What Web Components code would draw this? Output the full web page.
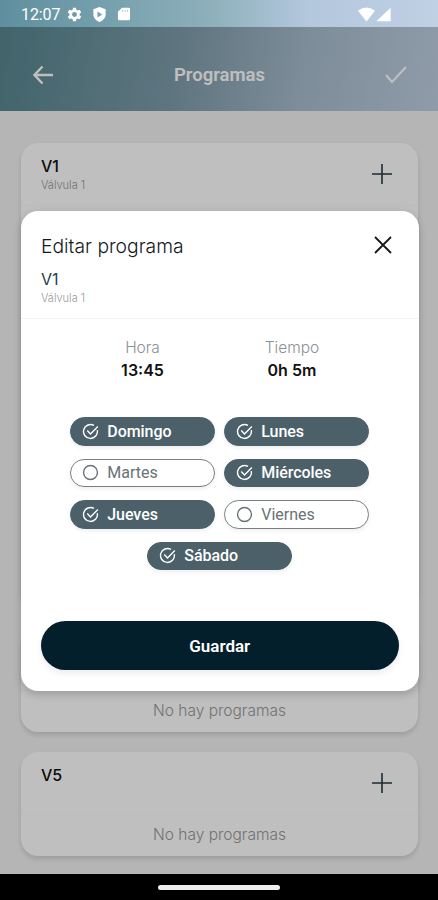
<!DOCTYPE html>
<html lang="es">
<head>
<meta charset="utf-8">
<title>Programas</title>
<style>
body {
    margin: 0;
    font-family: Inter, "Liberation Sans", sans-serif;
}
</style>
</head>
<body>
<program-app></program-app>

<script>
const icons = {
    back: '<path d="M21 11H3M10.500 2.500 2.500 11l8 8.500"/>',
    check: '<path d="m1 11 6 7L21 3"/>',
    plus: '<path d="M11 1v20M1 11h20"/>',
    close: '<path d="m3 3 16 16M19 3 3 19"/>',
    circle: '<circle cx="11" cy="11" r="9"/>',
    checked: '<path d="M19.8 9.3A9 9 0 1 1 15.5 3.2M6.8 9.8l4.2 4.4L20.5 4.5"/>',
    gear: '<path fill="currentColor" stroke="none" fill-rule="evenodd" d="m8.8 1-.5 3-2 1.2-2.9-1.1-2.2 3.8L3.6 9.8v2.4l-2.4 1.9 2.2 3.8 2.9-1.1 2 1.2.5 3h4.4l.5-3 2-1.2 2.9 1.1 2.2-3.8-2.4-1.9V9.8l2.4-1.9-2.2-3.8-2.9 1.1-2-1.2-.5-3zM11 7.4a3.6 3.6 0 1 1 0 7.2 3.6 3.6 0 0 1 0-7.2z"/>',
    shield: '<path fill="currentColor" stroke="none" fill-rule="evenodd" d="M11 0 2 3.2V11c0 5.2 4 9 9 11 5-2 9-5.8 9-11V3.2zM8 6.5v9l7-4.5z"/>',
    card: '<path fill="currentColor" stroke="none" fill-rule="evenodd" d="M8 1h10.5q2 0 2 2v16q0 2-2 2h-15q-2 0-2-2V7.5zM8 5v2h1.500V5zm4 0v2h1.500V5zm4 0v2h1.500V5z"/>',
    wifi: '<path fill="currentColor" stroke="none" d="M0 6Q11-2 22 6L11 20z"/>',
    signal: '<path fill="currentColor" stroke="none" d="M21.5 1v20h-21z"/>'
};

class UiIcon extends HTMLElement {
    constructor() {
        super();
        this.attachShadow({ mode: 'open' });
    }

    connectedCallback() {
        this.shadowRoot.innerHTML = `
            <style>
            :host {
                display: block;
                flex: none;
                height: var(--size, 20px);
                width: var(--size, 20px);
            }

            svg {
                display: block;
                fill: none;
                height: 100%;
                stroke: currentColor;
                stroke-width: var(--stroke, 1.8);
                width: 100%;
            }
            </style>
            <svg viewBox="0 0 22 22">${icons[this.getAttribute('name')]}</svg>
        `;
    }
}

class StatusBar extends HTMLElement {
    constructor() {
        super();
        this.attachShadow({ mode: 'open' }).innerHTML = `
            <style>
            :host {
                align-items: center;
                box-sizing: border-box;
                color: #fff;
                display: flex;
                font: 400 16px Roboto, sans-serif;
                height: 27px;
                padding: 1px 47px 0 21px;
            }

            span {
                letter-spacing: -.1px;
                width: 46px;
            }

            ui-icon {
                --size: 15px;
                margin-right: 10px;
            }

            .wifi {
                --size: 17px;
                margin: 0 1px 0 auto;
            }

            .signal {
                --size: 15px;
                margin: 0;
            }
            </style>
            <span>12:07</span>
            <ui-icon name="gear"></ui-icon>
            <ui-icon name="shield"></ui-icon>
            <ui-icon name="card" style="--size: 14px"></ui-icon>
            <ui-icon class="wifi" name="wifi"></ui-icon>
            <ui-icon class="signal" name="signal"></ui-icon>
        `;
    }
}

class TopBar extends HTMLElement {
    constructor() {
        super();
        this.attachShadow({ mode: 'open' }).innerHTML = `
            <style>
            :host {
                align-items: center;
                box-sizing: border-box;
                color: #fff;
                display: flex;
                font: 600 18.5px Roboto, sans-serif;
                height: 84px;
                justify-content: space-between;
                padding: 11px 31px 0 32px;
            }

            ui-icon {
                --size: 22px;
                --stroke: 2.5;
            }

            ui-icon:last-child {
                --stroke: 2;
            }
            </style>
            <ui-icon name="back"></ui-icon>
            <slot></slot>
            <ui-icon name="check"></ui-icon>
        `;
    }
}

class ValveCard extends HTMLElement {
    constructor() {
        super();
        this.attachShadow({ mode: 'open' }).innerHTML = `
            <style>
            :host {
                background: #fff;
                border-radius: 17px;
                box-shadow: 0 3px 5px #0002;
                box-sizing: border-box;
                color: #111;
                display: flex;
                flex-direction: column;
                height: 104px;
            }

            header {
                box-sizing: border-box;
                display: flex;
                height: 62px;
                justify-content: space-between;
                padding: 13.5px 25px 0 20px;
            }

            .name {
                font-size: 16px;
                font-weight: 500;
                line-height: 19px;
            }

            .label {
                color: #999;
                font-size: 11px;
                font-weight: 300;
                line-height: 18px;
            }

            ui-icon {
                --size: 22px;
                --stroke: 1.6;
                color: #263d43;
                margin-top: 6px;
            }

            .body {
                border-top: 1px solid #fbfbfb;
                color: #999;
                font-size: 15.5px;
                font-weight: 300;
                line-height: 40px;
                text-align: center;
            }
            </style>
            <header>
                <div>
                    <div class="name"><slot name="name"></slot></div>
                    <div class="label"><slot name="label"></slot></div>
                </div>
                <ui-icon name="plus"></ui-icon>
            </header>
            <div class="body"><slot></slot></div>
        `;
    }
}

class DayChip extends HTMLElement {
    constructor() {
        super();
        this.attachShadow({ mode: 'open' });
    }

    connectedCallback() {
        let icon = this.hasAttribute('checked') ? 'checked' : 'circle';
        this.shadowRoot.innerHTML = `
            <style>
            :host {
                align-items: center;
                border: 1px solid #777f82;
                border-radius: 15px;
                box-shadow: 0 2px 4px #0001;
                box-sizing: border-box;
                color: #697276;
                display: flex;
                font: 400 16px Roboto, sans-serif;
                gap: 8.5px;
                height: 28.5px;
                padding-left: 11px;
                width: 145px;
            }

            :host([checked]) {
                background: #4b6068;
                border-color: #4b6068;
                color: #fff;
                font-weight: 500;
                letter-spacing: -.05px;
            }

            ui-icon {
                --size: 17px;
            }
            </style>
            <ui-icon name="${icon}"></ui-icon>
            <slot></slot>
        `;
    }
}

class ProgramValue extends HTMLElement {
    constructor() {
        super();
        this.attachShadow({ mode: 'open' }).innerHTML = `
            <style>
            :host {
                color: #111;
                display: block;
                font-size: 16px;
                font-weight: 600;
                line-height: 22px;
                text-align: center;
                width: 149.5px;
            }

            .label {
                color: #8b9093;
                font-size: 15.5px;
                font-weight: 300;
            }
            </style>
            <div class="label"><slot name="label"></slot></div>
            <slot></slot>
        `;
    }
}

class EditDialog extends HTMLElement {
    constructor() {
        super();
        this.attachShadow({ mode: 'open' }).innerHTML = `
            <style>
            :host {
                background: #fff;
                border-radius: 17px;
                box-shadow: 0 3px 8px #0003;
                color: #16191b;
                display: flex;
                flex-direction: column;
                height: 480px;
                width: 397.5px;
            }

            header {
                border-bottom: 1px solid #f3f4f5;
                box-sizing: border-box;
                display: flex;
                height: 108px;
                justify-content: space-between;
                padding: 22px 25px 0 20px;
            }

            .title {
                font-size: 19.3px;
                font-weight: 300;
                line-height: 26px;
            }

            .valve {
                color: #243f48;
                font-size: 16px;
                line-height: 20px;
                margin-top: 10px;
            }

            .label {
                color: #999;
                font-size: 11px;
                font-weight: 300;
                line-height: 18px;
            }

            header ui-icon {
                --size: 22px;
                --stroke: 1.8;
                margin-top: 1px;
            }

            .values {
                display: flex;
                justify-content: center;
                padding: 18px 5px 0 0;
            }

            .days {
                display: flex;
                flex-wrap: wrap;
                gap: 13px 9px;
                justify-content: center;
                padding: 36.5px 40px 0 39px;
            }

            button {
                background: #021f2b;
                border: 0;
                border-radius: 25px;
                box-shadow: 0 4px 6px #0001;
                color: #fff;
                font: 600 17px Roboto, sans-serif;
                height: 49px;
                margin: auto 20px 20.5px;
            }
            </style>
            <header>
                <div>
                    <div class="title"><slot name="title"></slot></div>
                    <div class="valve"><slot name="valve"></slot></div>
                    <div class="label"><slot name="label"></slot></div>
                </div>
                <ui-icon name="close"></ui-icon>
            </header>
            <div class="values"><slot name="value"></slot></div>
            <div class="days"><slot></slot></div>
            <button>Guardar</button>
        `;
    }
}

class ProgramApp extends HTMLElement {
    constructor() {
        super();
        this.attachShadow({ mode: 'open' }).innerHTML = `
            <style>
            :host {
                background: #f2f2f2;
                display: flex;
                flex-direction: column;
                height: 900px;
                overflow: hidden;
                position: relative;
                width: 438px;
            }

            .top {
                background: linear-gradient(100deg, #56858e 0%, #7f9dab 42%, #a9bdce 70%, #bfcfe1 100%);
            }

            .bar {
                background: linear-gradient(90deg, #5f8f9f, #8db0bb 48%, #b3c7dd 70%, #c0d0e5);
            }

            main {
                display: flex;
                flex: 1;
                flex-direction: column;
                gap: 20px;
                padding: 32px 20px 0 21px;
            }

            .tall {
                height: 465px;
            }

            footer {
                background: #000;
                box-sizing: border-box;
                height: 26px;
                padding-top: 10.5px;
            }

            footer div {
                background: #eee;
                border-radius: 3px;
                height: 5px;
                margin: 0 auto;
                width: 122px;
            }

            .overlay {
                background: #00000040;
                box-sizing: border-box;
                height: 847px;
                left: 0;
                padding: 183.5px 0 0 21px;
                position: absolute;
                top: 27px;
                width: 100%;
            }
            </style>

            <div class="top">
                <status-bar class="bar"></status-bar>
                <top-bar>Programas</top-bar>
            </div>
            <main>
                <valve-card class="tall">
                    <span slot="name">V1</span>
                    <span slot="label">Válvula 1</span>
                </valve-card>
                <valve-card>No hay programas</valve-card>
                <valve-card>
                    <span slot="name">V5</span>
                    No hay programas
                </valve-card>
            </main>
            <footer><div></div></footer>

            <div class="overlay">
                <edit-dialog>
                    <span slot="title">Editar programa</span>
                    <span slot="valve">V1</span>
                    <span slot="label">Válvula 1</span>
                    <program-value slot="value"><span slot="label">Hora</span>13:45</program-value>
                    <program-value slot="value"><span slot="label">Tiempo</span>0h 5m</program-value>
                    <day-chip checked>Domingo</day-chip>
                    <day-chip checked>Lunes</day-chip>
                    <day-chip>Martes</day-chip>
                    <day-chip checked>Miércoles</day-chip>
                    <day-chip checked>Jueves</day-chip>
                    <day-chip>Viernes</day-chip>
                    <day-chip checked>Sábado</day-chip>
                </edit-dialog>
            </div>
        `;
    }
}

window.customElements.define('ui-icon', UiIcon);
window.customElements.define('status-bar', StatusBar);
window.customElements.define('top-bar', TopBar);
window.customElements.define('valve-card', ValveCard);
window.customElements.define('day-chip', DayChip);
window.customElements.define('program-value', ProgramValue);
window.customElements.define('edit-dialog', EditDialog);
window.customElements.define('program-app', ProgramApp);
</script>
</body>
</html>
